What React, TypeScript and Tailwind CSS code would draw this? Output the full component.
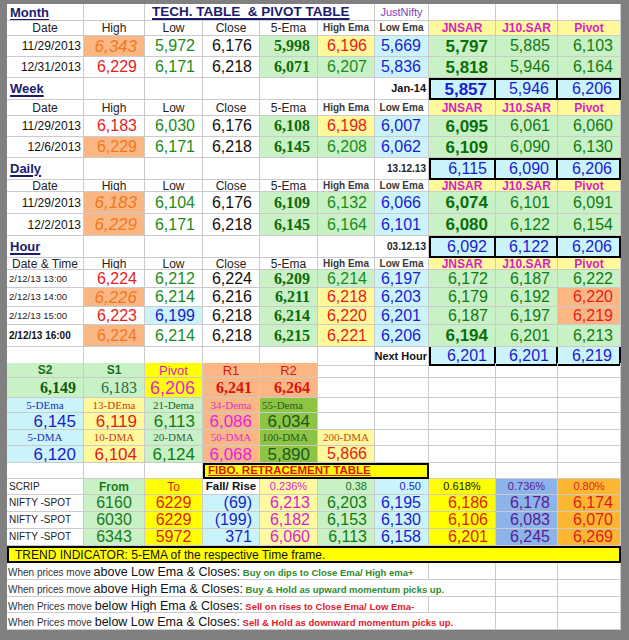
import React from "react";

const GRID =
  "grid grid-cols-[77px_61px_58px_57px_58px_57px_54px_67px_62px_63px]";

const G_BG = "bg-[#c9f1c6]";
const Y_BG = "bg-[#fff99c]";
const C_BG = "bg-[#cbf4fa]";
const O_BG = "bg-[#fab784]";
const SERIF = "font-['Liberation_Serif',serif]";

const R = "justify-end pr-[7px]";
const CT = "justify-center";

type CellProps = {
  c?: React.ReactNode;
  className?: string;
  b?: string;
  ov?: string;
};

function Cell({ c, className = "", b, ov = "overflow-hidden" }: CellProps) {
  const border = b ?? "border-r border-b border-[#cbcbcb]";
  return (
    <div
      className={
        "flex items-center whitespace-nowrap leading-none " +
        ov +
        " " +
        border +
        " " +
        className
      }
    >
      {c}
    </div>
  );
}

function Row({ h, children }: { h: string; children: React.ReactNode }) {
  return <div className={GRID + " " + h}>{children}</div>;
}

const dateCls = "justify-end pr-[2px] text-[12px] text-[#111]";
const hiRed = R + " text-[16px] text-[#e81c1c]";
const hiOrIt = O_BG + " " + R + " text-[17px] italic text-[#f0781e]";
const hiOr = O_BG + " " + R + " text-[16px] text-[#f0781e]";
const low = R + " text-[16px] text-[#1a8c1a]";
const lowC = C_BG + " " + R + " text-[16px] text-[#1b1bd0]";
const close = R + " text-[16px] text-[#111]";
const ema5 =
  G_BG + " " + R + " text-[16px] font-bold " + SERIF + " text-[#0b6b0b]";
const hemaY = Y_BG + " " + R + " text-[16px] text-[#e81c1c]";
const hemaG = G_BG + " " + R + " text-[16px] text-[#1a8c1a]";
const lema = C_BG + " " + R + " text-[16px] text-[#1b1bd0]";
const jn = G_BG + " " + R + " text-[17px] font-bold text-[#0b6e0b]";
const jnR = G_BG + " " + R + " text-[16px] text-[#137a13]";
const jg = G_BG + " " + R + " text-[16px] text-[#137a13]";
const pivO = O_BG + " " + R + " text-[16px] text-[#e81c1c]";

const boxFirst = "border-2 border-black";
const boxRest = "border-2 border-l-0 border-black";
const boxCls = C_BG + " " + R + " text-[16px] text-[#1b1bd0]";

function Title({ t }: { t: string }) {
  return (
    <Cell
      className="justify-start pl-[3px] text-[13px] font-bold underline decoration-[1.5px] underline-offset-2 text-[#1c1c6e]"
      c={t}
    />
  );
}

function Header({ h, first }: { h: string; first: string }) {
  const hc = CT + " text-[12px] text-[#222]";
  const sm = CT + " text-[10px] font-bold text-[#3a3a3a]";
  const yh = Y_BG + " " + CT + " text-[12px] font-bold text-[#d61fbf]";
  return (
    <Row h={h}>
      <Cell className={hc} c={first} />
      <Cell className={hc} c="High" />
      <Cell className={hc} c="Low" />
      <Cell className={hc} c="Close" />
      <Cell className={hc} c="5-Ema" />
      <Cell className={sm} c="High Ema" />
      <Cell className={sm} c="Low Ema" />
      <Cell className={yh} c="JNSAR" />
      <Cell className={yh} c="J10.SAR" />
      <Cell className={yh} c="Pivot" />
    </Row>
  );
}

function Data({ h, cells }: { h: string; cells: [string, string][] }) {
  return (
    <Row h={h}>
      {cells.map(([t, cls], i) => (
        <Cell key={i} className={cls} c={t} />
      ))}
    </Row>
  );
}

function SarRow({
  h,
  label,
  dateLbl,
  dateCls2,
  vals,
  boldFirst,
}: {
  h: string;
  label: string;
  dateLbl: string;
  dateCls2: string;
  vals: [string, string, string];
  boldFirst?: boolean;
}) {
  return (
    <Row h={h}>
      <Title t={label} />
      <Cell />
      <Cell />
      <Cell />
      <Cell />
      <Cell />
      <Cell className={dateCls2} c={dateLbl} />
      <Cell
        b={boxFirst}
        className={boxCls + (boldFirst ? " font-bold text-[17px]" : "")}
        c={vals[0]}
      />
      <Cell b={boxRest} className={boxCls} c={vals[1]} />
      <Cell b={boxRest} className={boxCls} c={vals[2]} />
    </Row>
  );
}

export default function App() {
  const hourDt = "justify-start pl-[2px] text-[9.5px] text-[#222]";
  const hourDtB = "justify-start pl-[2px] text-[10px] font-bold text-[#111]";

  const lblBase = " text-[11px] " + SERIF + " ";
  const fnum = R + " text-[16px] ";

  return (
    <div className="w-[629px] h-[640px] bg-[#808080] pt-[4px] pl-[7px] font-['Liberation_Sans',Arial,sans-serif]">
      <div className="w-[614px] bg-white">
        {/* Month */}
        <Row h="h-[17px]">
          <Title t="Month" />
          <Cell />
          <Cell
            className="col-span-4 justify-start pl-[7px] text-[13.5px] font-bold underline decoration-[1.5px] underline-offset-2 text-[#1c1c6e] whitespace-pre"
            c="TECH. TABLE  & PIVOT TABLE"
          />
          <Cell className={CT + " text-[11px] text-[#7a3fbf]"} c="JustNifty" />
          <Cell />
          <Cell />
          <Cell />
        </Row>
        <Header h="h-[15px]" first="Date" />
        <Data
          h="h-[21px]"
          cells={[
            ["11/29/2013", dateCls],
            ["6,343", hiOrIt],
            ["5,972", low],
            ["6,176", close],
            ["5,998", ema5],
            ["6,196", hemaY],
            ["5,669", lema],
            ["5,797", jn],
            ["5,885", jg],
            ["6,103", jg],
          ]}
        />
        <Data
          h="h-[21px]"
          cells={[
            ["12/31/2013", dateCls],
            ["6,229", hiRed],
            ["6,171", low],
            ["6,218", close],
            ["6,071", ema5],
            ["6,207", hemaG],
            ["5,836", lema],
            ["5,818", jn],
            ["5,946", jg],
            ["6,164", jg],
          ]}
        />

        {/* Week */}
        <SarRow
          h="h-[22px]"
          label="Week"
          dateLbl="Jan-14"
          dateCls2="justify-end pr-[2px] text-[11px] font-bold text-[#111]"
          vals={["5,857", "5,946", "6,206"]}
          boldFirst
        />
        <Header h="h-[16px]" first="Date" />
        <Data
          h="h-[21px]"
          cells={[
            ["11/29/2013", dateCls],
            ["6,183", hiRed],
            ["6,030", low],
            ["6,176", close],
            ["6,108", ema5],
            ["6,198", hemaY],
            ["6,007", lema],
            ["6,095", jn],
            ["6,061", jg],
            ["6,060", jg],
          ]}
        />
        <Data
          h="h-[21px]"
          cells={[
            ["12/6/2013", dateCls],
            ["6,229", hiOr],
            ["6,171", low],
            ["6,218", close],
            ["6,145", ema5],
            ["6,208", hemaG],
            ["6,062", lema],
            ["6,109", jn],
            ["6,090", jg],
            ["6,130", jg],
          ]}
        />

        {/* Daily */}
        <SarRow
          h="h-[22px]"
          label="Daily"
          dateLbl="13.12.13"
          dateCls2="justify-end pr-[2px] text-[10px] font-bold text-[#222]"
          vals={["6,115", "6,090", "6,206"]}
        />
        <Header h="h-[12px]" first="Date" />
        <Data
          h="h-[22px]"
          cells={[
            ["11/29/2013", dateCls],
            ["6,183", hiOrIt],
            ["6,104", low],
            ["6,176", close],
            ["6,109", ema5],
            ["6,132", hemaG],
            ["6,066", lema],
            ["6,074", jn],
            ["6,101", jg],
            ["6,091", jg],
          ]}
        />
        <Data
          h="h-[22px]"
          cells={[
            ["12/2/2013", dateCls],
            ["6,229", hiOrIt],
            ["6,171", low],
            ["6,218", close],
            ["6,145", ema5],
            ["6,164", hemaG],
            ["6,101", lema],
            ["6,080", jn],
            ["6,122", jg],
            ["6,154", jg],
          ]}
        />

        {/* Hour */}
        <SarRow
          h="h-[22px]"
          label="Hour"
          dateLbl="03.12.13"
          dateCls2="justify-end pr-[2px] text-[10px] font-bold text-[#222]"
          vals={["6,092", "6,122", "6,206"]}
        />
        <Header h="h-[12px]" first="Date & Time" />
        <Data
          h="h-[18px]"
          cells={[
            ["2/12/13 13:00", hourDt],
            ["6,224", hiRed],
            ["6,212", low],
            ["6,224", close],
            ["6,209", ema5],
            ["6,214", hemaG],
            ["6,197", lema],
            ["6,172", jnR],
            ["6,187", jg],
            ["6,222", jg],
          ]}
        />
        <Data
          h="h-[19px]"
          cells={[
            ["2/12/13 14:00", hourDt],
            ["6,226", hiOrIt],
            ["6,214", low],
            ["6,216", close],
            ["6,211", ema5],
            ["6,218", hemaY],
            ["6,203", lema],
            ["6,179", jnR],
            ["6,192", jg],
            ["6,220", pivO],
          ]}
        />
        <Data
          h="h-[18px]"
          cells={[
            ["2/12/13 15:00", hourDt],
            ["6,223", hiRed],
            ["6,199", lowC],
            ["6,218", close],
            ["6,214", ema5],
            ["6,220", hemaY],
            ["6,201", lema],
            ["6,187", jnR],
            ["6,197", jg],
            ["6,219", pivO],
          ]}
        />
        <Data
          h="h-[22px]"
          cells={[
            ["2/12/13 16:00", hourDtB],
            ["6,224", hiOr],
            ["6,214", low],
            ["6,218", close],
            ["6,215", ema5],
            ["6,221", hemaY],
            ["6,206", lema],
            ["6,194", jn],
            ["6,201", jg],
            ["6,213", jg],
          ]}
        />
        {/* Next Hour */}
        <Row h="h-[16px]">
          <Cell />
          <Cell />
          <Cell />
          <Cell />
          <Cell />
          <Cell />
          <Cell
            className="justify-end pr-[1px] text-[11px] font-bold text-[#111]"
            c="Next Hour"
          />
          <Cell
            b="border-l-2 border-r-2 border-b-2 border-black"
            ov="overflow-visible"
            className={boxCls + " pt-[1px]"}
            c="6,201"
          />
          <Cell
            b="border-r-2 border-b-2 border-black"
            ov="overflow-visible"
            className={boxCls + " pt-[1px]"}
            c="6,201"
          />
          <Cell
            b="border-r-2 border-b-2 border-black"
            ov="overflow-visible"
            className={boxCls + " pt-[1px]"}
            c="6,219"
          />
        </Row>

        {/* Pivot levels */}
        <Row h="h-[15px]">
          <Cell className={G_BG + " " + CT + " text-[12px] font-bold text-[#1a6e1a]"} c="S2" />
          <Cell className={G_BG + " " + CT + " text-[12px] font-bold text-[#1a6e1a]"} c="S1" />
          <Cell className={"bg-[#ffff00] " + CT + " text-[13px] text-[#d81ec8]"} c="Pivot" />
          <Cell className={O_BG + " " + CT + " text-[13px] text-[#d01a1a]"} c="R1" />
          <Cell className={O_BG + " " + CT + " text-[13px] text-[#d01a1a]"} c="R2" />
          <Cell />
          <Cell />
          <Cell />
          <Cell />
          <Cell />
        </Row>
        <Row h="h-[20px]">
          <Cell
            className={G_BG + " " + R + " text-[16px] font-bold " + SERIF + " text-[#0d5e0d]"}
            c="6,149"
          />
          <Cell
            className={G_BG + " " + R + " text-[16px] " + SERIF + " text-[#2a6a4a]"}
            c="6,183"
          />
          <Cell className={"bg-[#ffff00] " + R + " text-[18px] text-[#e21ee0]"} c="6,206" />
          <Cell
            className={O_BG + " " + R + " text-[16px] font-bold " + SERIF + " text-[#d81414]"}
            c="6,241"
          />
          <Cell
            className={O_BG + " " + R + " text-[16px] font-bold " + SERIF + " text-[#d81414]"}
            c="6,264"
          />
          <Cell />
          <Cell />
          <Cell />
          <Cell />
          <Cell />
        </Row>
        <Row h="h-[15px]">
          <Cell className={C_BG + " " + CT + lblBase + "text-[#2030c0]"} c="5-DEma" />
          <Cell className={Y_BG + " " + CT + lblBase + "text-[#c83a1a]"} c="13-DEma" />
          <Cell className={G_BG + " " + CT + lblBase + "text-[#1f5f1f]"} c="21-Dema" />
          <Cell className={O_BG + " " + CT + lblBase + "text-[#e030d0]"} c="34-Dema" />
          <Cell
            className={"bg-[#8cc443] justify-start pl-[2px]" + lblBase + "text-[#2a5a1a]"}
            c="55-Dema"
          />
          <Cell />
          <Cell />
          <Cell />
          <Cell />
          <Cell />
        </Row>
        <Row h="h-[17px]">
          <Cell className={C_BG + " " + R + " text-[17px] text-[#1c1cc8]"} c="6,145" />
          <Cell className={Y_BG + " " + R + " text-[17px] text-[#e01c1c]"} c="6,119" />
          <Cell className={G_BG + " " + R + " text-[17px] text-[#137a13]"} c="6,113" />
          <Cell className={O_BG + " " + R + " text-[17px] text-[#e81ee0]"} c="6,086" />
          <Cell className={"bg-[#8cc443] " + R + " text-[17px] text-[#1a5a1a]"} c="6,034" />
          <Cell />
          <Cell />
          <Cell />
          <Cell />
          <Cell />
        </Row>
        <Row h="h-[16px]">
          <Cell className={C_BG + " " + CT + lblBase + "text-[#2030c0]"} c="5-DMA" />
          <Cell className={Y_BG + " " + CT + lblBase + "text-[#c83a1a]"} c="10-DMA" />
          <Cell className={G_BG + " " + CT + lblBase + "text-[#2f5f3f]"} c="20-DMA" />
          <Cell className={O_BG + " " + CT + lblBase + "text-[#e030d0]"} c="50-DMA" />
          <Cell
            className={"bg-[#8cc443] justify-start pl-[2px]" + lblBase + "text-[#2a5a1a]"}
            c="100-DMA"
          />
          <Cell className={Y_BG + " " + CT + lblBase + "text-[#c0501e]"} c="200-DMA" />
          <Cell />
          <Cell />
          <Cell />
          <Cell />
        </Row>
        <Row h="h-[17px]">
          <Cell className={C_BG + " " + R + " text-[17px] text-[#1c1cc8]"} c="6,120" />
          <Cell className={Y_BG + " " + R + " text-[17px] text-[#e01c1c]"} c="6,104" />
          <Cell className={G_BG + " " + R + " text-[17px] text-[#137a13]"} c="6,124" />
          <Cell className={O_BG + " " + R + " text-[17px] text-[#e81ee0]"} c="6,068" />
          <Cell className={"bg-[#8cc443] " + R + " text-[17px] text-[#1a5a1a]"} c="5,890" />
          <Cell className={Y_BG + " " + R + " text-[16px] text-[#e01c1c]"} c="5,866" />
          <Cell />
          <Cell />
          <Cell />
          <Cell />
        </Row>

        {/* FIBO */}
        <Row h="h-[16px]">
          <Cell />
          <Cell />
          <Cell />
          <Cell
            b="border-2 border-black"
            className="col-span-4 bg-[#ffff00] justify-start pl-[3px] text-[11.5px] font-bold underline text-[#d81414]"
            c="FIBO. RETRACEMENT TABLE"
          />
          <Cell />
          <Cell />
          <Cell />
        </Row>
        <Row h="h-[16px]">
          <Cell className="justify-start pl-[2px] text-[10px] text-[#222]" c="SCRIP" />
          <Cell className={G_BG + " " + CT + " text-[12px] font-bold text-[#1a7a1a]"} c="From" />
          <Cell className={"bg-[#ffff00] " + CT + " text-[12px] text-[#e01c1c]"} c="To" />
          <Cell className={CT + " text-[11.5px] font-bold text-[#111]"} c="Fall/ Rise" />
          <Cell className={"bg-[#fff9a0] " + CT + " text-[11px] text-[#d91ed0]"} c="0.236%" />
          <Cell className={G_BG + " " + R + " text-[11px] text-[#1a6e1a]"} c="0.38" />
          <Cell className={C_BG + " " + R + " text-[11px] text-[#1c1cc8]"} c="0.50" />
          <Cell className={"bg-[#ffff00] " + CT + " text-[11px] text-[#111]"} c="0.618%" />
          <Cell className={"bg-[#8cb3ea] " + CT + " text-[11px] text-[#5a2090]"} c="0.736%" />
          <Cell className={"bg-[#fbb731] " + CT + " text-[11px] text-[#e01c1c]"} c="0.80%" />
        </Row>
        {[
          ["6160", "6229", "(69)", "6,213", "6,203", "6,195", "6,186", "6,178", "6,174"],
          ["6030", "6229", "(199)", "6,182", "6,153", "6,130", "6,106", "6,083", "6,070"],
          ["6343", "5972", "371", "6,060", "6,113", "6,158", "6,201", "6,245", "6,269"],
        ].map((r, i) => (
          <Row key={i} h="h-[17px]">
            <Cell className="justify-start pl-[2px] text-[10px] text-[#222]" c="NIFTY -SPOT" />
            <Cell className={G_BG + " " + CT + " text-[16px] text-[#1a7a1a]"} c={r[0]} />
            <Cell className={"bg-[#ffff00] " + CT + " text-[16px] text-[#e01c1c]"} c={r[1]} />
            <Cell className={C_BG + " " + fnum + "text-[#1c1cc8]"} c={r[2]} />
            <Cell className={"bg-[#fff9a0] " + fnum + "text-[#d91ed0]"} c={r[3]} />
            <Cell className={G_BG + " " + fnum + "text-[#137a13]"} c={r[4]} />
            <Cell className={C_BG + " " + fnum + "text-[#1c1cc8]"} c={r[5]} />
            <Cell className={"bg-[#ffff00] " + fnum + "text-[#e01c1c]"} c={r[6]} />
            <Cell className={"bg-[#8cb3ea] " + fnum + "text-[#5a2090]"} c={r[7]} />
            <Cell className={"bg-[#fbb731] " + fnum + "text-[#e01c1c]"} c={r[8]} />
          </Row>
        ))}

        {/* Trend */}
        <Row h="h-[17px]">
          <Cell
            b="border-2 border-black"
            className="col-span-10 bg-[#ffff00] justify-start pl-[6px] text-[12px] text-[#111]"
            c="TREND INDICATOR: 5-EMA of the respective Time frame."
          />
        </Row>

        {(
          [
            ["When prices move ", "above Low Ema & Closes:", " Buy on dips to Close Ema/ High ema+", "g", 7],
            ["When prices move ", "above High Ema & Closes:", " Buy & Hold as upward momentum picks up.", "g", 8],
            ["When Prices move ", "below High Ema & Closes:", " Sell on rises to Close Ema/ Low Ema-", "r", 7],
            ["When Prices move ", "below Low Ema & Closes:", " Sell & Hold as downward momentum picks up.", "r", 8],
          ] as [string, string, string, string, number][]
        ).map(([a, b, c, col, span], i) => (
          <Row key={i} h={i === 2 ? "h-[16px]" : "h-[17px]"}>
            <Cell
              className={
                (span === 7 ? "col-span-7" : "col-span-8") +
                " justify-start pl-[1px] whitespace-pre"
              }
              c={
                <span className="leading-none">
                  <span className="text-[10px] text-[#333]">{a}</span>
                  <span className="text-[12.5px] text-[#111]">{b}</span>
                  <span
                    className={
                      "text-[9.5px] font-bold " +
                      (col === "g" ? "text-[#2e8b2e]" : "text-[#e0202a]")
                    }
                  >
                    {c}
                  </span>
                </span>
              }
            />
            {span === 7 ? <Cell /> : null}
            <Cell />
            <Cell />
          </Row>
        ))}
      </div>
    </div>
  );
}
